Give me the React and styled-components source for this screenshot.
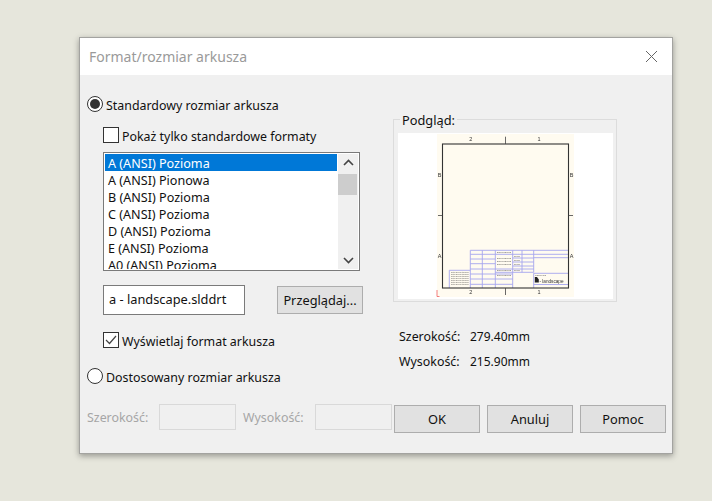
import React from 'react';
import styled, { createGlobalStyle } from 'styled-components';

const GlobalStyle = createGlobalStyle`
  html, body { margin: 0; padding: 0; background: #e6e6dc; }
  body { width: 712px; height: 501px; overflow: hidden; font-family: "Noto Sans", "Open Sans", sans-serif; font-size: 12.4px; color: #111; }
`;

const Dialog = styled.div`
  box-sizing: border-box;
  width: 594px;
  height: 417px;
  margin: 37px 0 0 79px;
  background: #f0f0f0;
  border: 1px solid #a3a3a0;
  box-shadow: 0 2px 6px rgba(0, 0, 0, 0.35);
`;

const TitleBar = styled.div`
  display: flex;
  align-items: center;
  justify-content: space-between;
  height: 37px;
  padding: 0 14px 0 9px;
  background: #fff;
  color: #9a9a9a;
  font-size: 14px;
`;

const Main = styled.div`
  display: flex;
  height: 329px;
`;

const LeftColumn = styled.div`
  width: 306px;
  padding: 21px 0 0 7px;
`;

const RightColumn = styled.div`
  padding: 44px 0 0 0;
`;

const OptionRow = styled.div`
  display: flex;
  align-items: center;
  height: 16px;
  margin-left: ${p => p.$indent || 0}px;
  margin-top: ${p => p.$top || 0}px;
  gap: 3px;
`;

const OptionText = styled.span`
  padding-top: 2px;
`;

const RadioMark = styled.span`
  box-sizing: border-box;
  display: flex;
  align-items: center;
  justify-content: center;
  width: 16px;
  height: 16px;
  border-radius: 50%;
  border: 1px solid #333;
  background: #fff;
  &::after {
    content: '';
    display: ${p => (p.$on ? 'block' : 'none')};
    width: 10px;
    height: 10px;
    border-radius: 50%;
    background: #333;
  }
`;

const CheckMark = styled.span`
  box-sizing: border-box;
  display: flex;
  align-items: center;
  justify-content: center;
  width: 16px;
  height: 16px;
  border: 1px solid #333;
  background: #fff;
`;

const ListBox = styled.div`
  box-sizing: border-box;
  display: flex;
  width: 257px;
  height: 119px;
  margin: 9px 0 0 16px;
  border: 1px solid #7a7a7a;
  background: #fff;
  padding: 1px;
`;

const Items = styled.div`
  flex: 1;
  overflow: hidden;
`;

const Item = styled.div`
  box-sizing: border-box;
  height: 17px;
  line-height: 17px;
  padding: 1px 0 0 3px;
  font-size: 12.6px;
  white-space: nowrap;
  background: ${p => (p.$selected ? '#0078d7' : 'transparent')};
  color: ${p => (p.$selected ? '#fff' : '#111')};
`;

const ScrollBar = styled.div`
  display: flex;
  flex-direction: column;
  justify-content: space-between;
  width: 20px;
  margin-left: 1px;
  background: #f0f0f0;
  position: relative;
`;

const ScrollThumb = styled.div`
  position: absolute;
  left: 0;
  top: 20px;
  width: 19px;
  height: 21px;
  background: #cdcdcd;
`;

const ScrollArrow = styled.div`
  display: flex;
  align-items: center;
  justify-content: center;
  height: 17px;
`;

const FileRow = styled.div`
  display: flex;
  align-items: center;
  margin: 14px 0 0 16px;
`;

const FileField = styled.div`
  box-sizing: border-box;
  width: 142px;
  height: 30px;
  padding: 4px 0 0 5px;
  border: 1px solid #7a7a7a;
  background: #fff;
  font-size: 12.8px;
`;

const Button = styled.button`
  box-sizing: border-box;
  width: 86px;
  height: 28px;
  margin-left: ${p => p.$left || 0}px;
  padding: 0;
  background: #e1e1e1;
  border: 1px solid #adadad;
  font: inherit;
  font-size: 12.8px;
  color: #111;
`;

const PreviewGroup = styled.div`
  box-sizing: border-box;
  width: 224px;
  height: 183px;
  padding: 0 3px 2px 4px;
  border: 1px solid #dcdcdc;
  display: flex;
  position: relative;
`;

const PreviewLegend = styled.span`
  position: absolute;
  left: 6px;
  top: -9px;
  padding: 0 2px;
  line-height: 18px;
  font-size: 12.8px;
  background: #f0f0f0;
`;

const PreviewPanel = styled.div`
  display: flex;
  justify-content: center;
  width: 215px;
  height: 166px;
  margin-top: 13px;
  padding-top: 1px;
  box-sizing: border-box;
  background: #fff;
`;

const SizeGrid = styled.div`
  display: grid;
  grid-template-columns: 71px auto;
  grid-auto-rows: 25px;
  align-items: center;
  margin: 22px 0 0 6px;
`;

const SizeValue = styled.span`
  font-size: 12px;
`;

const Footer = styled.div`
  display: flex;
  align-items: flex-start;
  padding-left: 7px;
`;

const DisabledLabel = styled.span`
  width: 72px;
  height: 26px;
  margin-left: ${p => p.$left || 0}px;
  line-height: 28px;
  color: #a6a6a6;
`;

const DisabledField = styled.div`
  box-sizing: border-box;
  width: 77px;
  height: 26px;
  border: 1px solid #d9d9d9;
  background: #f0f0f0;
`;

const ButtonGroup = styled.div`
  display: flex;
  gap: 7px;
  margin: 1px 0 0 2px;
`;

const PreviewDrawing = styled.svg`
  display: block;
  overflow: visible;
  filter: blur(0.25px);
`;

const SHEETS = ['A (ANSI) Pozioma', 'A (ANSI) Pionowa', 'B (ANSI) Pozioma', 'C (ANSI) Pozioma', 'D (ANSI) Pozioma', 'E (ANSI) Pozioma', 'A0 (ANSI) Pozioma'];

const BLUE = '#a5a5ee';
const TICKS = [[68.5, 2.7, 68.5, 10], [68.5, 154, 68.5, 161], [1, 81.5, 5.5, 81.5], [131.5, 81.5, 136, 81.5]];
const MARKS = [['2', 33.7, 7], ['1', 102, 7], ['2', 33.7, 160], ['1', 102, 160], ['B', 2.7, 42.5], ['B', 134.5, 42.5], ['A', 2.7, 124], ['A', 134.5, 124]];
const BLUE_LINES = [
  // lewa czesc tabelki
  [33.3, 116.3, 131.5, 116.3], [33.3, 116.3, 33.3, 154], [45.3, 116.3, 45.3, 154], [58.3, 116.3, 58.3, 154], [75.7, 116.3, 75.7, 154],
  [33.3, 120.3, 58.3, 120.3], [33.3, 125, 58.3, 125], [33.3, 129.7, 58.3, 129.7], [33.3, 135, 58.3, 135], [33.3, 140, 75.7, 140], [33.3, 145, 75.7, 145], [33.3, 150.3, 75.7, 150.3],
  [58.3, 120.3, 131.5, 120.3], [58.3, 135, 96.7, 135], [58.3, 138.3, 96.7, 138.3],
  // srodek
  [75.7, 124, 96.7, 124], [75.7, 128, 96.7, 128], [75.7, 132, 96.7, 132], [85, 116.3, 85, 138.3], [96.7, 116.3, 96.7, 138.3], [96.7, 123.7, 131.5, 123.7],
  // pole z logo
  [96.7, 139.3, 131.5, 139.3], [96.7, 139.3, 96.7, 154], [96.7, 150.5, 131.5, 150.5],
  // uwagi
  [12.3, 136.3, 33.3, 136.3], [12.3, 136.3, 12.3, 154],
];
const NOTES = [139, 141, 143, 145, 147, 149, 151];
const BLOCK_NOTES = [[60, 119], [60, 125], [60, 128], [60, 131], [60, 137], [60, 142], [77, 123], [77, 127], [77, 131], [77, 137]];

function SheetPreview() {
  return (
    <PreviewDrawing width="137" height="163" viewBox="0 0 137 163">
      <rect width="137" height="163" fill="#fffbf0" />
      {BLUE_LINES.map((l, i) => (
        <line key={i} x1={l[0]} y1={l[1]} x2={l[2]} y2={l[3]} stroke={BLUE} strokeWidth="0.9" />
      ))}
      {NOTES.map(y => (
        <text key={y} x="14" y={y} fontSize="2.2" fontFamily="Liberation Sans" fill="#555" textLength="18" lengthAdjust="spacingAndGlyphs">Notes general tolerance</text>
      ))}
      {BLOCK_NOTES.map(([x, y]) => (
        <text key={`${x}-${y}`} x={x} y={y} fontSize="2.2" fontFamily="Liberation Sans" fill="#555" textLength={x === 60 ? 14 : 6} lengthAdjust="spacingAndGlyphs">Dimensions</text>
      ))}
      <text x="98" y="142" fontSize="2.4" fontFamily="Liberation Sans" fill="#555">FSCM NO</text>
      <path d="M97.8 148.5v-5.5h2.2l1.8 2.5v3z" fill="#222" />
      <text x="102.5" y="148.5" fontSize="6" fontFamily="Liberation Sans" fill="#333" textLength="24" lengthAdjust="spacingAndGlyphs">- landscape</text>
      <rect x="5.5" y="10" width="126" height="144" fill="none" stroke="#333" strokeWidth="1.1" />
      {TICKS.map((l, i) => (
        <line key={i} x1={l[0]} y1={l[1]} x2={l[2]} y2={l[3]} stroke="#444" strokeWidth="0.8" />
      ))}
      {MARKS.map((m, i) => (
        <text key={i} x={m[1]} y={m[2]} fontSize="5.5" fontFamily="Liberation Sans" fill="#333" textAnchor="middle">{m[0]}</text>
      ))}
      <path d="M0 156v6.5h2.5" fill="none" stroke="#f06060" strokeWidth="0.8" />
    </PreviewDrawing>
  );
}

function Chevron({ up }) {
  return (
    <svg width="11" height="7" viewBox="0 0 11 7">
      <polyline points={up ? '1,6 5.5,1.5 10,6' : '1,1 5.5,5.5 10,1'} fill="none" stroke="#444" strokeWidth="1.6" />
    </svg>
  );
}

export default function App() {
  return (
    <>
      <GlobalStyle />
      <Dialog>
        <TitleBar>
          <span>Format/rozmiar arkusza</span>
          <svg width="13" height="13" viewBox="0 0 13 13">
            <path d="M1 1l11 11M12 1L1 12" stroke="#666" strokeWidth="1" fill="none" />
          </svg>
        </TitleBar>
        <Main>
          <LeftColumn>
            <OptionRow>
              <RadioMark $on />
              <OptionText>Standardowy rozmiar arkusza</OptionText>
            </OptionRow>
            <OptionRow $indent={16} $top={15}>
              <CheckMark />
              <OptionText>Pokaż tylko standardowe formaty</OptionText>
            </OptionRow>
            <ListBox>
              <Items>
                {SHEETS.map((s, i) => (
                  <Item key={s} $selected={i === 0}>{s}</Item>
                ))}
              </Items>
              <ScrollBar>
                <ScrollArrow><Chevron up /></ScrollArrow>
                <ScrollThumb />
                <ScrollArrow><Chevron /></ScrollArrow>
              </ScrollBar>
            </ListBox>
            <FileRow>
              <FileField>a - landscape.slddrt</FileField>
              <Button $left={32}>Przeglądaj...</Button>
            </FileRow>
            <OptionRow $indent={16} $top={17}>
              <CheckMark>
                <svg width="12" height="10" viewBox="0 0 12 10">
                  <polyline points="1,5 4.5,8.5 11,1" fill="none" stroke="#444" strokeWidth="1.2" />
                </svg>
              </CheckMark>
              <OptionText>Wyświetlaj format arkusza</OptionText>
            </OptionRow>
            <OptionRow $top={20}>
              <RadioMark />
              <OptionText>Dostosowany rozmiar arkusza</OptionText>
            </OptionRow>
          </LeftColumn>
          <RightColumn>
            <PreviewGroup>
              <PreviewLegend>Podgląd:</PreviewLegend>
              <PreviewPanel>
                <SheetPreview />
              </PreviewPanel>
            </PreviewGroup>
            <SizeGrid>
              <span>Szerokość:</span>
              <SizeValue>279.40mm</SizeValue>
              <span>Wysokość:</span>
              <SizeValue>215.90mm</SizeValue>
            </SizeGrid>
          </RightColumn>
        </Main>
        <Footer>
          <DisabledLabel>Szerokość:</DisabledLabel>
          <DisabledField />
          <DisabledLabel $left={7}>Wysokość:</DisabledLabel>
          <DisabledField />
          <ButtonGroup>
            <Button>OK</Button>
            <Button>Anuluj</Button>
            <Button>Pomoc</Button>
          </ButtonGroup>
        </Footer>
      </Dialog>
    </>
  );
}
